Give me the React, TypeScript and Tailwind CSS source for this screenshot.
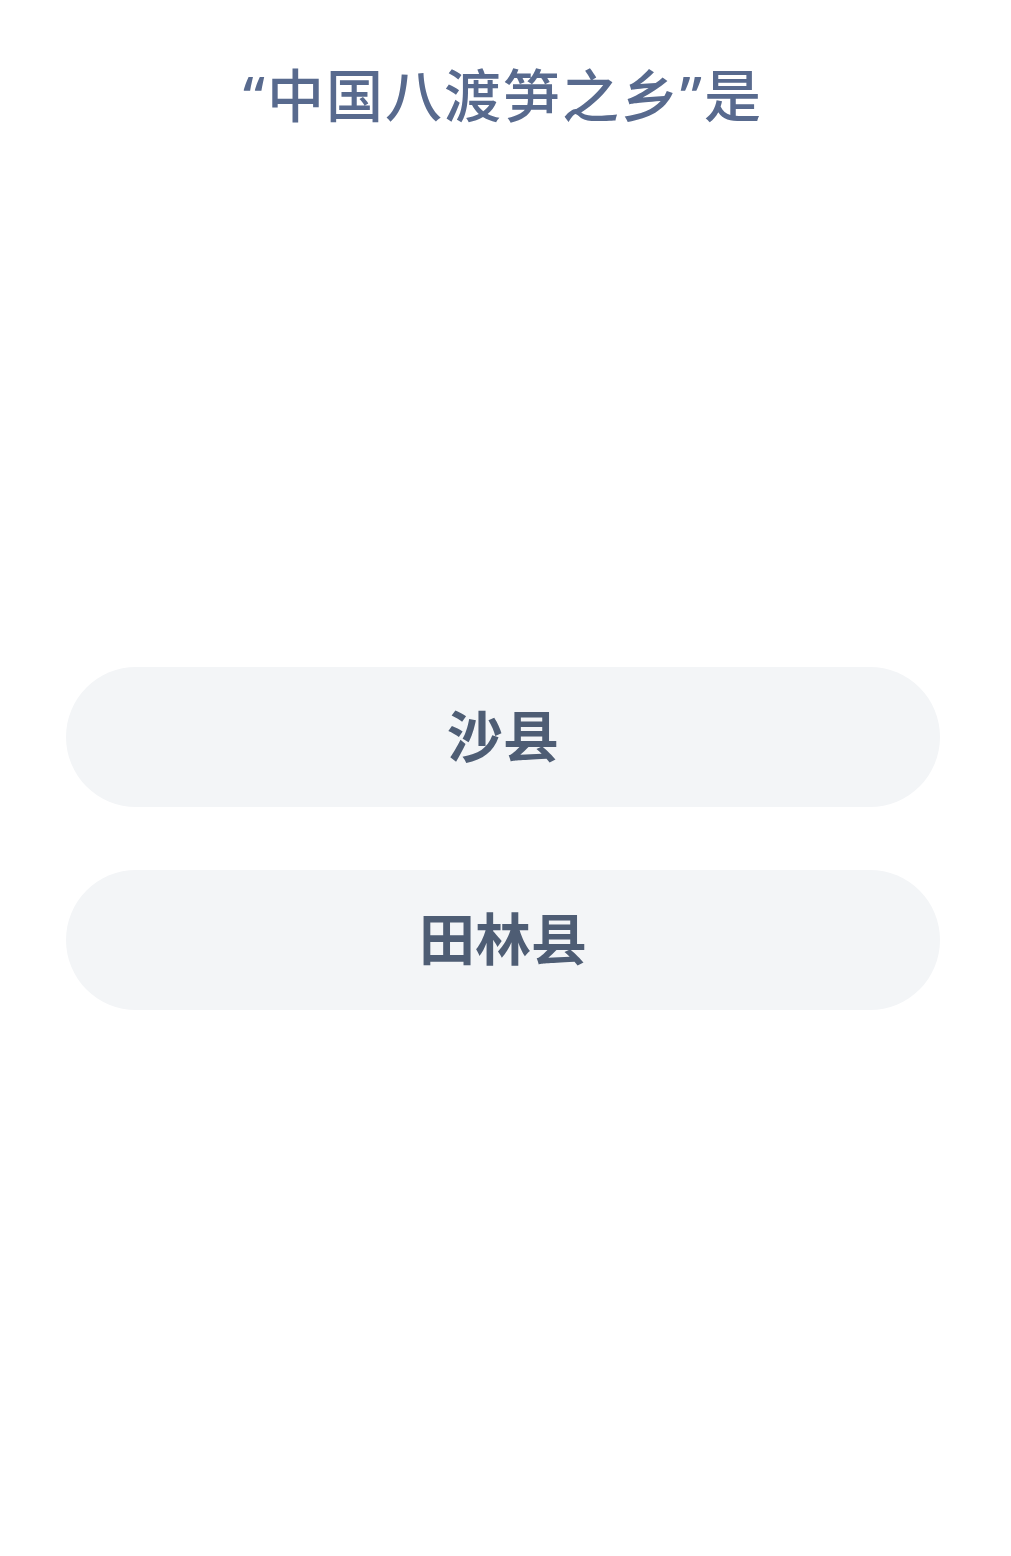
import { useState } from "react";

const options = ["沙县", "田林县"];

export default function App() {
  const [picked, setPicked] = useState<string | null>(null);

  return (
    <div
      className="min-h-[1556px] w-full bg-white"
      style={{ fontFamily: '"Noto Sans", "Noto Sans CJK SC", sans-serif' }}
    >
      <div className="w-[1006px] flex flex-col items-center">
        <h1 className="mt-[62px] text-[57px] leading-[66px] font-medium text-[#586a8e] tracking-[2px]">
          “中国八渡笋之乡”是
        </h1>

        <div className="mt-[539px] w-[874px] flex flex-col gap-[63px]">
          {options.map(opt => (
            <button
              key={opt}
              onClick={() => setPicked(opt)}
              className={
                "h-[140px] w-full rounded-full flex items-center justify-center pb-[5px] text-[56px] font-semibold text-[#4e5d74] " +
                (picked === opt ? "bg-[#e8ecf1]" : "bg-[#f3f5f7]")
              }
            >
              {opt}
            </button>
          ))}
        </div>
      </div>
    </div>
  );
}
